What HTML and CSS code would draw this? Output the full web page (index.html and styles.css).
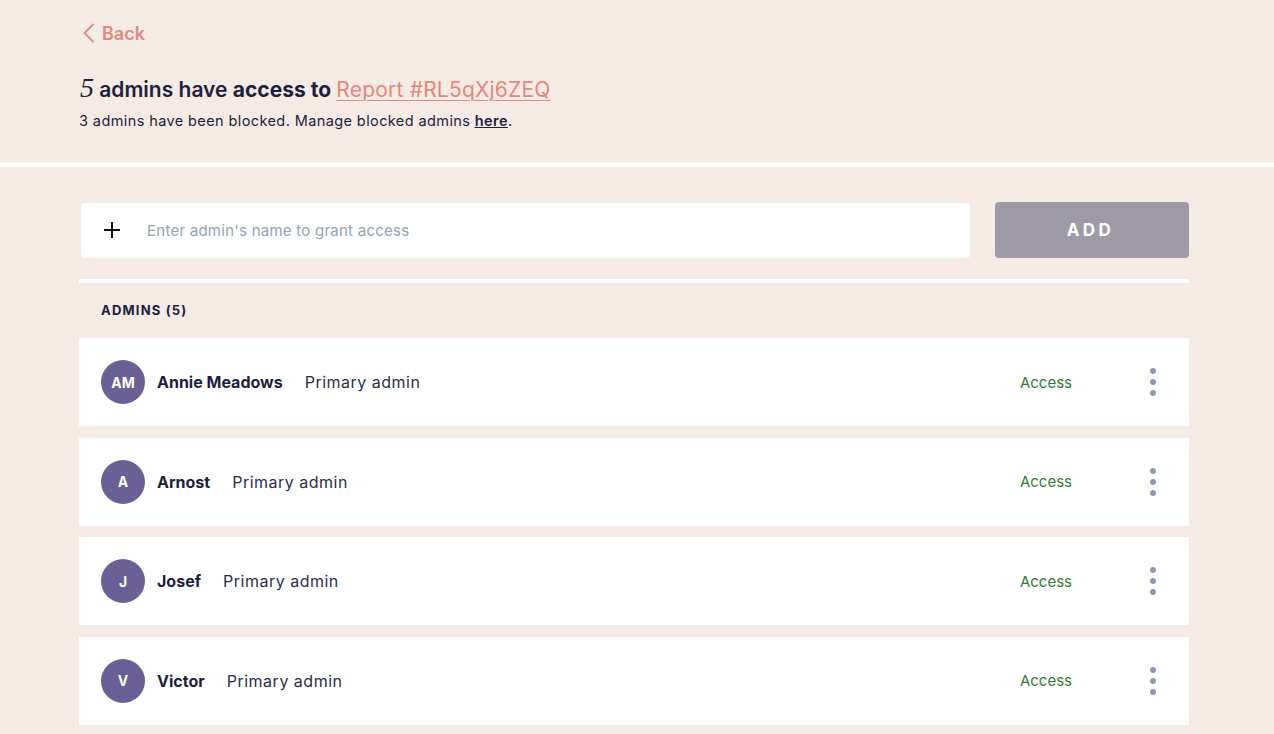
FILE: index.html
```html
<!DOCTYPE html>
<html lang="en">
<head>
<meta charset="utf-8">
<title>Admins access</title>
<link rel="stylesheet" href="styles.css">
</head>
<body>
<header class="top">
  <div class="container">
    <a class="back" href="#">
      <svg class="back-icon" width="13" height="20" viewBox="0 0 13 20"><path d="M11 1.5 L2.5 10 L11 18.5" fill="none" stroke="currentColor" stroke-width="1.8" stroke-linecap="round" stroke-linejoin="round"/></svg>
      <span>Back</span>
    </a>
    <h1 class="title"><span class="count">5</span> admins have <b>access to</b> <a class="report" href="#">Report #RL5qXj6ZEQ</a></h1>
    <p class="sub">3 admins have been blocked. Manage blocked admins <a class="here" href="#">here</a>.</p>
  </div>
</header>
<main class="container main">
  <div class="add-row">
    <label class="search">
      <svg class="plus" width="18" height="18" viewBox="0 0 18 18"><path d="M9 1 V17 M1 9 H17" stroke="#111" stroke-width="2" fill="none"/></svg>
      <span class="placeholder">Enter admin's name to grant access</span>
    </label>
    <button class="add-btn" type="button">ADD</button>
  </div>
  <div class="rule"></div>
  <div class="label">ADMINS (5)</div>
  <ul class="list">
    <li class="row"><span class="avatar">AM</span><span class="name">Annie Meadows</span><span class="role">Primary admin</span><span class="status">Access</span><span class="kebab"><i></i><i></i><i></i></span></li>
    <li class="row"><span class="avatar">A</span><span class="name">Arnost</span><span class="role">Primary admin</span><span class="status">Access</span><span class="kebab"><i></i><i></i><i></i></span></li>
    <li class="row"><span class="avatar">J</span><span class="name">Josef</span><span class="role">Primary admin</span><span class="status">Access</span><span class="kebab"><i></i><i></i><i></i></span></li>
    <li class="row"><span class="avatar">V</span><span class="name">Victor</span><span class="role">Primary admin</span><span class="status">Access</span><span class="kebab"><i></i><i></i><i></i></span></li>
  </ul>
</main>
</body>
</html>
```
FILE: styles.css
```css
* { box-sizing: border-box; }
body {
  margin: 0;
  background: #f5eae4;
  font-family: Inter, "Noto Sans", sans-serif;
  color: #1c1f3d;
}
.container {
  width: 1110px;
  margin-left: 79px;
}
.top {
  height: 167px;
  padding-top: 22px;
  border-bottom: 4px solid #ffffff;
}
.back {
  display: flex;
  align-items: center;
  gap: 7px;
  height: 22px;
  padding-left: 3px;
  color: #e0897d;
  font-size: 18px;
  font-weight: 600;
  text-decoration: none;
}
.back-icon { display: block; }
.title {
  margin: 30px 0 0 1px;
  font-size: 21px;
  line-height: 28px;
  font-weight: 600;
}
.title b { font-weight: 700; }
.count {
  font-family: "Liberation Serif", serif;
  font-style: italic;
  font-weight: 400;
  font-size: 28px;
}
.report {
  color: #e0897d;
  font-weight: 400;
  letter-spacing: 0.2px;
  text-decoration: underline;
  text-underline-offset: 3px;
  text-decoration-thickness: 1px;
}
.sub {
  margin: 7px 0 0 0;
  font-size: 14.5px;
  letter-spacing: 0.4px;
  line-height: 20px;
}
.here {
  color: #1c1f3d;
  font-weight: 600;
  text-decoration: underline;
}
.main { padding-top: 35px; }
.add-row {
  display: flex;
  align-items: center;
  gap: 25px;
}
.search {
  flex: 1;
  height: 55px;
  margin-left: 2px;
  background: #ffffff;
  border-radius: 4px;
  display: flex;
  align-items: center;
  padding-left: 22px;
  gap: 26px;
}
.plus { display: block; }
.placeholder {
  color: #94a2b5;
  font-size: 15px;
  letter-spacing: 0.25px;
}
.add-btn {
  width: 194px;
  height: 56px;
  border: 0;
  border-radius: 4px;
  background: #9e9ba6;
  color: #ffffff;
  font-family: inherit;
  font-size: 17px;
  font-weight: 700;
  letter-spacing: 3.5px;
  padding-left: 3px;
}
.rule {
  height: 4px;
  background: #ffffff;
  margin-top: 21px;
}
.label {
  margin: 17px 0 0 22px;
  font-size: 13px;
  line-height: 20px;
  font-weight: 700;
  letter-spacing: 1.2px;
}
.list {
  list-style: none;
  margin: 18px 0 0 0;
  padding: 0;
  display: flex;
  flex-direction: column;
  gap: 11.5px;
}
.row {
  height: 88px;
  background: #ffffff;
  display: flex;
  align-items: center;
  padding: 0 24px 0 22px;
  font-size: 15px;
}
.avatar {
  width: 44px;
  height: 44px;
  border-radius: 50%;
  background: #6a6096;
  color: #ffffff;
  font-size: 14px;
  font-weight: 700;
  display: flex;
  align-items: center;
  justify-content: center;
}
.name {
  margin-left: 12px;
  font-size: 16px;
  font-weight: 700;
}
.role {
  margin-left: 22px;
  font-size: 16px;
  letter-spacing: 0.5px;
  color: #2a2e4a;
}
.status {
  margin-left: auto;
  color: #2f7d32;
}
.kebab {
  margin-left: 69px;
  width: 24px;
  display: flex;
  flex-direction: column;
  align-items: center;
  gap: 5px;
}
.kebab i {
  display: block;
  width: 6px;
  height: 6px;
  border-radius: 50%;
  background: #8b9ab0;
}
```
